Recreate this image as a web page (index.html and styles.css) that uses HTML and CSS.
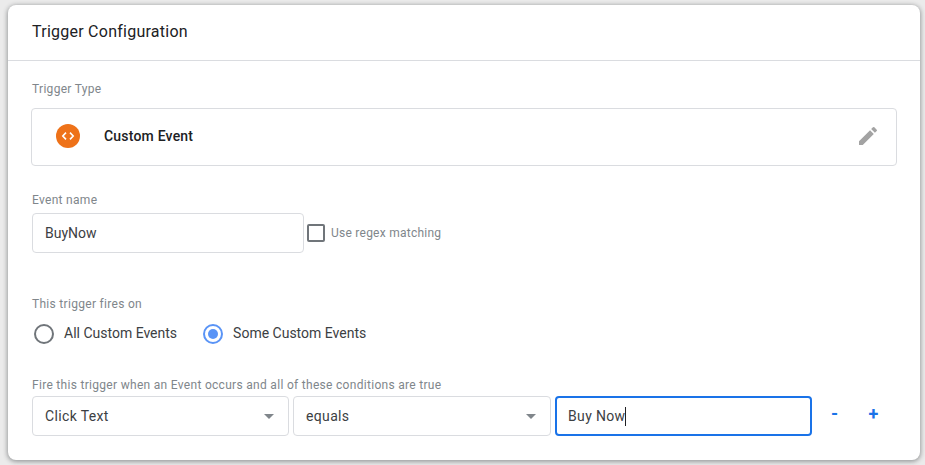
FILE: index.html
```html
<!DOCTYPE html>
<html lang="en">
<head>
<meta charset="utf-8">
<title>Trigger Configuration</title>
<link rel="stylesheet" href="styles.css">
</head>
<body>
<main class="card">
  <header class="card-header">Trigger Configuration</header>
  <div class="card-body">
    <div class="label type-label">Trigger Type</div>
    <div class="type-box">
      <svg class="type-icon" width="24" height="24" viewBox="0 0 24 24">
        <circle cx="12" cy="12" r="12" fill="#ee7219"/>
        <path d="M10 8.6 6.8 12l3.2 3.4M14 8.6l3.2 3.4-3.2 3.4" fill="none" stroke="#fff" stroke-width="1.6"/>
      </svg>
      <span class="type-name">Custom Event</span>
      <svg class="edit-icon" width="24" height="24" viewBox="0 0 24 24">
        <path fill="#a3a3a3" d="M3 17.25V21h3.75L17.81 9.94l-3.75-3.75L3 17.25zM20.71 7.04a1 1 0 0 0 0-1.41l-2.34-2.34a1 1 0 0 0-1.41 0l-1.83 1.83 3.75 3.75 1.83-1.83z"/>
      </svg>
    </div>
    <div class="label name-label">Event name</div>
    <div class="name-row">
      <div class="field name-field">BuyNow</div>
      <span class="checkbox"></span>
      <span class="check-label">Use regex matching</span>
    </div>
    <div class="label fires-label">This trigger fires on</div>
    <div class="radio-row">
      <span class="radio"></span>
      <span class="radio-text first">All Custom Events</span>
      <span class="radio selected"></span>
      <span class="radio-text">Some Custom Events</span>
    </div>
    <div class="label cond-label">Fire this trigger when an Event occurs and all of these conditions are true</div>
    <div class="cond-row">
      <div class="field select">Click Text<span class="arrow"></span></div>
      <div class="field select">equals<span class="arrow"></span></div>
      <div class="field focused">Buy Now<span class="caret"></span></div>
      <span class="action minus">-</span>
      <span class="action plus">+</span>
    </div>
  </div>
</main>
</body>
</html>
```

FILE: styles.css
```css
* { box-sizing: border-box; }

html, body { height: 100%; }

body {
  margin: 0;
  padding: 5px 5px 5px 8px;
  background: #ebebeb;
  font-family: Roboto, "Liberation Sans", sans-serif;
  color: #202124;
  overflow: hidden;
}

.card {
  height: 455px;
  background: #fff;
  border-radius: 8px;
  box-shadow: 0 1px 4px 1px rgba(60, 64, 67, .45);
}

.card-header {
  height: 56px;
  padding: 17px 24px 0;
  border-bottom: 1px solid #dadce0;
  font-size: 16px;
  line-height: 20px;
  letter-spacing: .25px;
}

.card-body { padding: 0 23px 0 24px; }

.label {
  font-size: 12px;
  line-height: 16px;
  letter-spacing: .3px;
  color: #80868b;
}

.type-label { padding-top: 20px; height: 47px; }

.type-box {
  display: flex;
  align-items: center;
  height: 58px;
  margin-left: -1px;
  padding: 0 16px 2px 24px;
  border: 1px solid #dadce0;
  border-radius: 4px;
}

.type-name {
  flex: 1;
  margin-left: 24px;
  font-size: 14px;
  font-weight: 500;
  letter-spacing: .2px;
}

.name-label { margin-top: 27px; height: 20px; line-height: 15px; }

.name-row { display: flex; align-items: center; }

.field {
  display: flex;
  align-items: center;
  height: 40px;
  padding: 0 12px;
  border: 1px solid #dadce0;
  border-radius: 4px;
  font-size: 14px;
  letter-spacing: .35px;
  color: #3c4043;
}

.name-field { width: 272px; letter-spacing: 0; }

.checkbox {
  width: 18px;
  height: 18px;
  margin: 0 6px 0 3px;
  border: 2px solid #70757a;
  border-radius: 2px;
}

.check-label {
  font-size: 12px;
  letter-spacing: .25px;
  color: #80868b;
}

.fires-label { margin-top: 43px; }

.radio-row {
  display: flex;
  align-items: center;
  height: 22px;
  margin-top: 11px;
  padding-left: 2px;
}

.radio {
  position: relative;
  width: 20px;
  height: 20px;
  border: 2px solid #70757a;
  border-radius: 50%;
}

.radio.selected { border-color: #5a94f6; }

.radio.selected::after {
  content: "";
  position: absolute;
  inset: 3px;
  border-radius: 50%;
  background: #5a94f6;
}

.radio-text {
  margin-left: 10px;
  padding-bottom: 2px;
  font-size: 14px;
  color: #3c4043;
}

.radio-text.first { margin-right: 26px; }

.cond-label { margin-top: 32px; height: 19px; }

.cond-row { display: flex; align-items: center; }

.cond-row .field { width: 257px; margin-right: 4px; }

.cond-row .select { justify-content: space-between; padding-right: 14px; }

.cond-row .select + .select { width: 258px; }

.arrow {
  width: 0;
  height: 0;
  border-left: 5px solid transparent;
  border-right: 5px solid transparent;
  border-top: 5px solid #80868b;
}

.field.focused {
  border: 2px solid #1a73e8;
  padding-left: 11px;
}

.caret {
  width: 1px;
  height: 19px;
  background: #202124;
}

.action {
  width: 39px;
  text-align: center;
  font-size: 18px;
  font-weight: 700;
  line-height: 20px;
  color: #1a73e8;
  margin-top: -4px;
}

.minus { margin-left: -1px; }
```
